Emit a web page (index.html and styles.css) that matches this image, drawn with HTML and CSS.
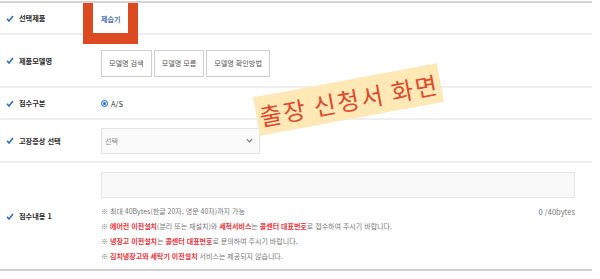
FILE: index.html
```html
<!DOCTYPE html>
<html lang="ko">

<head>
    <meta charset="UTF-8">
    <meta name="viewport" content="width=device-width, initial-scale=1.0">
    <title>출장 신청서 화면</title>
    <link rel="stylesheet" href="styles.css">
</head>

<body>
    <div class="form">
        <!-- 선택제품 -->
        <div class="row row-product">
            <div class="label"><svg class="check" viewBox="0 0 8 7"><polyline points="1,3.8 3,6 7,1"/></svg>선택제품</div>
            <div class="value"><span class="product">제습기</span></div>
        </div>
        <!-- 제품모델명 -->
        <div class="row row-model">
            <div class="label"><svg class="check" viewBox="0 0 8 7"><polyline points="1,3.8 3,6 7,1"/></svg>제품모델명</div>
            <div class="value btns">
                <button class="btn">모델명 검색</button>
                <button class="btn">모델명 모름</button>
                <button class="btn">모델명 확인방법</button>
            </div>
        </div>
        <!-- 접수구분 -->
        <div class="row row-type">
            <div class="label"><svg class="check" viewBox="0 0 8 7"><polyline points="1,3.8 3,6 7,1"/></svg>접수구분</div>
            <div class="value"><span class="radio"></span><span class="radio-text">A/S</span></div>
        </div>
        <!-- 고장증상 -->
        <div class="row row-symptom">
            <div class="label"><svg class="check" viewBox="0 0 8 7"><polyline points="1,3.8 3,6 7,1"/></svg>고장증상 선택</div>
            <div class="value">
                <div class="select">
                    <span>선택</span>
                    <svg class="chevron" viewBox="0 0 8 5"><polyline points="1,1 4,4 7,1"/></svg>
                </div>
            </div>
        </div>
        <!-- 접수내용 -->
        <div class="row row-content">
            <div class="label"><svg class="check" viewBox="0 0 8 7"><polyline points="1,3.8 3,6 7,1"/></svg>접수내용 1</div>
            <div class="value">
                <textarea class="textarea"></textarea>
                <div class="notes">
                    <div class="note-first">
                        <p>※ 최대 40Bytes(한글 20자, 영문 40자)까지 가능</p>
                        <span class="count"><em>0</em> /40bytes</span>
                    </div>
                    <p>※ <b>에어컨 이전설치</b>(분리 또는 재설치)와 <b>세척서비스</b>는 <b>콜센터 대표번호</b>로 접수하여 주시기 바랍니다.</p>
                    <p>※ <b>냉장고 이전설치</b>는 <b>콜센터 대표번호</b>로 문의하여 주시기 바랍니다.</p>
                    <p>※ <b>김치냉장고와 세탁기 이전설치</b> 서비스는 제공되지 않습니다.</p>
                </div>
            </div>
        </div>
    </div>

    <!-- 표시용 -->
    <div class="highlight"></div>
    <div class="sticker">출장 신청서 화면</div>
</body>

</html>
```

FILE: styles.css
```css
body {
    margin: 0;
    font-family: "Noto Sans CJK KR", "Noto Sans", sans-serif;
    color: #333;
    background: #fff;
}

.form {
    width: 592px;
    margin-top: 1px;
    border-top: 2px solid #d3d3d3;
    border-bottom: 2px solid #d0d0d0;
}

.row {
    display: grid;
    grid-template-columns: 101px 1fr;
    align-items: center;
    border-bottom: 2px solid #efefef;
}

.row:last-child {
    border-bottom: 0;
}

.row-product {
    height: 30px;
}

.row-model {
    height: 51px;
}

.row-type {
    height: 30px;
}

.row-symptom {
    height: 41px;
}

.row-content {
    height: 106px;
}

.label {
    display: flex;
    align-items: center;
    padding-left: 6px;
    font-size: 7.2px;
    font-weight: 700;
    color: #2b2b2b;
}

.check {
    width: 8px;
    height: 7px;
    margin-right: 5px;
    fill: none;
    stroke: #2f6fcb;
    stroke-width: 1.6;
}

.value {
    display: flex;
    align-items: center;
    font-size: 7px;
}

.product {
    color: #4a73b8;
    font-size: 7px;
    font-weight: 700;
    margin-top: 1px;
}

.btns {
    gap: 2px;
    margin-top: 5px;
}

.btn {
    height: 27px;
    padding: 0 7px;
    border: 1px solid #cfcfcf;
    background: #fff;
    color: #555;
    font-family: inherit;
    font-size: 7.1px;
}

.radio {
    width: 5px;
    height: 5px;
    border: 1px solid #2f7ae5;
    border-radius: 50%;
    background: #1a73e8;
    box-shadow: inset 0 0 0 1px #fff;
    margin-right: 3px;
}

.radio-text {
    font-size: 7.5px;
    color: #333;
}

.select {
    width: 154px;
    height: 24px;
    border: 1px solid #e3e3e3;
    background: #fafafa;
    display: flex;
    align-items: center;
    justify-content: space-between;
    padding: 0 0 0 3px;
    color: #888;
    font-size: 7px;
}

.chevron {
    width: 7px;
    height: 5px;
    margin-right: 6px;
    fill: none;
    stroke: #777;
    stroke-width: 1.4;
}

.row-content .value {
    flex-direction: column;
    align-items: stretch;
    align-self: start;
    padding-top: 9px;
    width: 474px;
}

.textarea {
    display: block;
    box-sizing: border-box;
    width: 474px;
    height: 26px;
    margin: 0;
    border: 1px solid #e6e6e6;
    background: #f9f9f9;
    resize: none;
}

.notes {
    margin-top: 6px;
    font-size: 7px;
    line-height: 15px;
    color: #777;
}

.notes p {
    margin: 0;
}

.notes b {
    color: #ee3338;
}

.note-first {
    display: flex;
    justify-content: space-between;
}

.count {
    font-size: 7.5px;
    color: #777;
}

.count em {
    font-style: normal;
    color: #4a73b8;
}

.highlight {
    position: absolute;
    left: 83px;
    top: 3px;
    width: 35px;
    height: 30px;
    border: solid #db4a20;
    border-width: 0 10px 11px 10px;
}

.sticker {
    position: absolute;
    left: 255px;
    top: 80px;
    width: 187px;
    height: 39px;
    box-sizing: border-box;
    padding-left: 3px;
    background: #fde8b6;
    color: #e0492b;
    font-size: 24px;
    line-height: 39px;
    letter-spacing: 2px;
    word-spacing: -2px;
    white-space: nowrap;
    transform: rotate(-10.5deg);
}
```
